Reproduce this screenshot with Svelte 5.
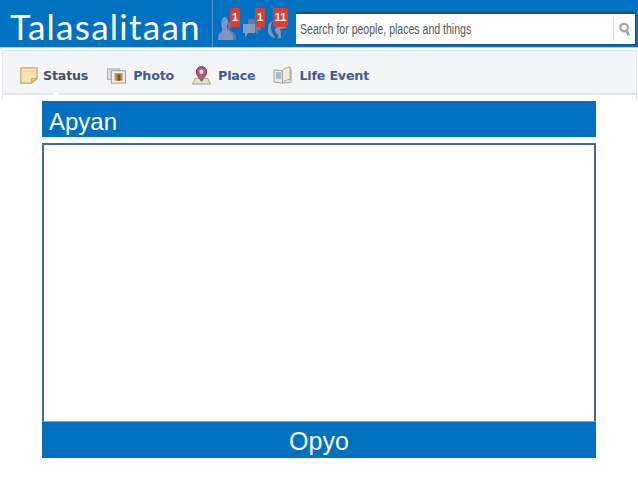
<script>
  const composerTabs = [
    { id: 'status', label: 'Status', active: true },
    { id: 'photo', label: 'Photo' },
    { id: 'place', label: 'Place' },
    { id: 'event', label: 'Life Event' },
  ];
  const alerts = [
    { id: 'friends', count: 1 },
    { id: 'messages', count: 1 },
    { id: 'globe', count: 11 },
  ];
</script>

<div class="page">
  <header class="topbar">
    <h1 class="brand">Talasalitaan</h1>
    <div class="alerts">
      {#each alerts as alert}
        <div class="alert {alert.id}">
          <svg viewBox="0 0 18 23" width="18" height="23" aria-hidden="true">
            {#if alert.id === 'friends'}
              <path d="M10 5c2 0 3 2 3 4s-1 3-1 4c1 2 4 2 5 4 1 1 1 3 1 6h-6l-2-6z" fill="#5f78ae" />
              <path d="M6 0c3 0 4 2 4 5 0 2-2 4-1 6 1 3 4 3 5 6 1 2 1 4 1 6H0c0-3 0-5 2-7 2-1 3-3 2-5C3 8 3 1 6 0z" fill="#7f94c2" />
            {:else if alert.id === 'messages'}
              <path d="M5 2h13v11h-3v5l-4-5H5z" fill="#5f78ae" />
              <path d="M0 7h12v9H5l-3 5v-5H0z" fill="#869ac6" />
            {:else}
              <circle cx="9" cy="12" r="9.500" fill="#7f94c2" />
              <path d="M5 4c3 0 5 1 5 4s-3 2-3 5 2 3 3 5-1 4-2 4c-2-2-3-5-4-7S2 7 5 4zM12 12l6-1c0 5-2 8-5 9 0-3 0-5-1-8z" fill="#0f6ab4" />
            {/if}
          </svg>
          <span class="badge">{alert.count}</span>
        </div>
      {/each}
    </div>
    <div class="search">
      <span class="search-text">Search for people, places and things</span>
      <span class="search-btn">
        <svg viewBox="0 0 14 18" width="11" height="15" aria-hidden="true">
          <circle cx="6.500" cy="6.500" r="4.800" fill="none" stroke="#a4a4a4" stroke-width="2.800" />
          <path d="M9.500 10.500l3 6" stroke="#a4a4a4" stroke-width="3.400" />
        </svg>
      </span>
    </div>
  </header>

  <nav class="composer">
    {#each composerTabs as tab}
      <div class="tab {tab.id}" class:active={tab.active}>
        <svg viewBox="0 0 20 20" width="19" height="19" aria-hidden="true">
          {#if tab.id === 'status'}
            <path d="M2 2h17v11l-6 5H2z" fill="#f7e4ae" stroke="#c3a668" stroke-width="1.300" />
            <path d="M13 18v-5h6z" fill="#e0c688" stroke="#c3a668" />
            <path d="M4 5.500h13" stroke="#e8cf93" stroke-width="1.300" />
          {:else if tab.id === 'photo'}
            <rect x="0.500" y="3" width="13" height="11" fill="#dfe1e6" stroke="#a5a8b0" />
            <rect x="4.500" y="5" width="15" height="13" fill="#eceef1" stroke="#8f939c" />
            <rect x="8" y="7.500" width="8.500" height="8" fill="#c98a3e" />
            <rect x="11" y="9" width="3" height="6.500" fill="#7d5122" />
          {:else if tab.id === 'place'}
            <path d="M0.500 19l3-6h13l3 6z" fill="#dfe3c8" stroke="#9ea383" />
            <path d="M10 16C7 12 4.500 9.500 4.500 6a5.500 5.500 0 0 1 11 0C15.500 9.500 13 12 10 16z" fill="#ab5c78" stroke="#8c4560" />
            <circle cx="10" cy="6" r="2.300" fill="#ecd7de" />
          {:else}
            <path d="M1 4l9 1 9-1v13l-9 1-9-1z" fill="#e6e8ec" stroke="#a09b88" />
            <path d="M10 5c1-2 4-3.500 8-4v13c-4 .5-7 2-8 4z" fill="#f1efe4" stroke="#a09b88" />
            <rect x="3" y="6.500" width="5.500" height="7" fill="#a9b6d3" />
          {/if}
        </svg>
        <span class="tab-label">{tab.label}</span>
      </div>
    {/each}
  </nav>

  <main class="slide">
    <div class="answer-title">Apyan</div>
    <div class="answer-box"></div>
    <div class="answer-foot">Opyo</div>
  </main>
</div>

<style>
  :global(body) {
    background: #fff;
  }

  .page {
    width: 638px;
    height: 479px;
    overflow: hidden;
    background: #fff;
  }

  .topbar {
    display: flex;
    height: 47px;
    background: #0070c0;
    border-bottom: 1px solid #b6cfe9;
  }

  .brand {
    width: 202px;
    height: 47px;
    margin: 0;
    padding-left: 10px;
    border-right: 1px solid #5c97cf;
    color: #fff;
    font: 400 35px/53px Lato, sans-serif;
    letter-spacing: 1.250px;
    white-space: nowrap;
  }

  .alerts {
    display: flex;
    gap: 7px;
    width: 83px;
    padding-left: 5px;
    box-sizing: border-box;
  }

  .alert {
    position: relative;
    width: 18px;
    padding-top: 17px;
    box-sizing: border-box;
  }

  .badge {
    position: absolute;
    top: 8px;
    left: 12px;
    width: 10px;
    height: 19px;
    border-radius: 2px;
    background: #d8402f;
    color: #fff;
    font: 700 11px/19px "Liberation Sans", sans-serif;
    text-align: center;
  }

  .globe .badge {
    left: 5px;
    width: 15px;
  }

  .search {
    display: flex;
    align-items: center;
    justify-content: space-between;
    width: 340px;
    height: 33px;
    margin-top: 12px;
    box-sizing: border-box;
    border: 1px solid #19497f;
    border-top-width: 2px;
    border-left: 0;
    background: #fff;
  }

  .search-text {
    padding-left: 6px;
    color: #555;
    font: 400 15.500px "Liberation Sans", sans-serif;
    white-space: nowrap;
    transform: scaleX(0.68);
    transform-origin: left center;
  }

  .search-btn {
    display: flex;
    align-items: center;
    justify-content: center;
    width: 21px;
    height: 24px;
    border-left: 1px solid #dcdcdc;
  }

  .composer {
    position: relative;
    display: flex;
    align-items: center;
    gap: 18px;
    height: 45px;
    margin: 2px 1px 0 2px;
    padding: 6px 0 0 16px;
    box-sizing: border-box;
    background: #f4f5f7;
    border: 1px solid #e4e6ea;
    border-bottom: 2px solid #e3e5e9;
  }

  /* side rules run on past the bar */
  .composer::before {
    content: "";
    position: absolute;
    left: -1px;
    right: -1px;
    top: 100%;
    height: 6px;
    box-sizing: border-box;
    border: 1px solid #e4e6ea;
    border-width: 0 1px;
  }

  .tab {
    display: flex;
    align-items: center;
    gap: 7px;
  }

  .tab-label {
    color: #3f5a94;
    font: 700 12.700px "DejaVu Sans", sans-serif;
    letter-spacing: -0.2px;
  }

  .active {
    position: relative;
    gap: 5px;
    margin-right: 1px;
  }

  .active .tab-label {
    color: #47505f;
  }

  .active::after {
    content: "";
    position: absolute;
    left: 31px;
    bottom: -12px;
    border: 6px solid transparent;
    border-top: 0;
    border-bottom-color: #fff;
  }

  .slide {
    display: flex;
    flex-direction: column;
    width: 554px;
    margin: 6px 0 0 42px;
  }

  .answer-title {
    height: 36px;
    padding-left: 7px;
    background: #0070c0;
    color: #fff;
    font: 400 24px/41px "Liberation Sans", sans-serif;
  }

  .answer-box {
    height: 278px;
    margin-top: 6px;
    box-sizing: border-box;
    background: #fff;
    border: 2px solid #3f6a97;
    border-bottom: 0;
  }

  .answer-foot {
    height: 37px;
    box-sizing: border-box;
    background: #0070c0;
    border-top: 1px solid #6ea6d9;
    color: #fff;
    font: 400 25px/39px "Liberation Sans", sans-serif;
    text-align: center;
  }
</style>
